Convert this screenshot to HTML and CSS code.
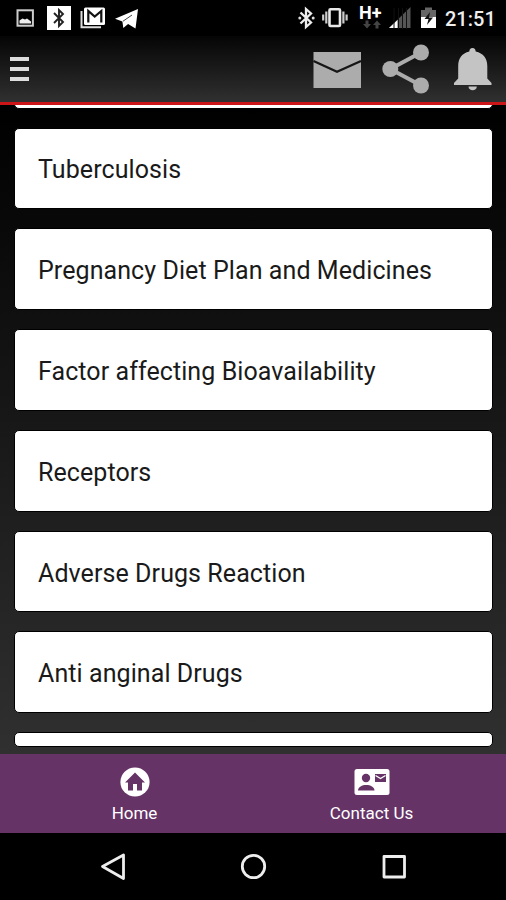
FILE: index.html
```html
<!DOCTYPE html>
<html lang="en">
<head>
  <meta charset="UTF-8" />
  <meta name="viewport" content="width=device-width, initial-scale=1.0"/>
  <title>Topics</title>
  <link rel="stylesheet" href="styles.css">
</head>
<body>
  <div class="status-bar">
    <svg class="status-left" width="150" height="36" viewBox="0 0 150 36">
      <!-- picture -->
      <rect x="17.5" y="10.3" width="15.4" height="15.4" fill="none" stroke="#ccc" stroke-width="2"/>
      <path d="M19.5 23.5v-3l3-2 2.5 1 2-1 4 3v2z" fill="#eee"/>
      <!-- bluetooth -->
      <rect x="47" y="6" width="24" height="24" fill="#fff"/>
      <path d="M54 13l9 9-4 4V10l4 4-9 9" fill="none" stroke="#222" stroke-width="1.9"/>
      <!-- mail stack -->
      <path d="M81.5 11v16.2H101" fill="none" stroke="#ddd" stroke-width="2"/>
      <rect x="84" y="7.5" width="21" height="17.5" rx="1.5" fill="#fff"/>
      <path d="M88.3 22.5V11l6.4 5.5 6.6-5.5v11.5" fill="none" stroke="#111" stroke-width="2.2"/>
      <!-- paper plane -->
      <path d="M115 18.8L138 9l-2.5 19.5-7.4-4.5-4.8 4-.9-6.4z" fill="#fff"/>
      <path d="M123 21.2l9-6.2" fill="none" stroke="#444" stroke-width="1"/>
    </svg>
    <svg class="status-icons" width="146" height="36" viewBox="298 0 146 36">
      <!-- bluetooth -->
      <path d="M300.5 12.5l10.5 10-5 4.5V9l5 4.5-10.5 10" fill="none" stroke="#eee" stroke-width="2.3"/>
      <circle cx="299.8" cy="18" r="1.5" fill="#ddd"/>
      <circle cx="313.2" cy="18" r="1.5" fill="#ddd"/>
      <!-- vibrate -->
      <rect x="329.5" y="9.2" width="10.5" height="16.8" rx="1" fill="none" stroke="#e8e8e8" stroke-width="2.6"/>
      <path d="M326.3 11.5v12M343.4 11.5v12M323.2 14.5v6M346.6 14.5v6" stroke="#ccc" stroke-width="2.2"/>
      <!-- mobile data -->
      <text x="359" y="19" class="net">H+</text>
      <path d="M363 24h2.5v-3.5h3V24h2.5l-4 4.5zM373 25l4-4.5 4 4.5h-2.5v3.5h-3V25z" fill="#444"/>
      <!-- signal -->
      <path d="M389 28L410.5 7v21z" fill="#555"/>
      <path d="M389 28l8.5-8v8z" fill="#fff"/>
      <path d="M394 8v21M398.5 8v21M402.5 8v21M406.5 8v21" stroke="#111" stroke-width="1"/>
      <!-- battery -->
      <path d="M421 10h4V7.5h7V10h4v8h-15z" fill="#666"/>
      <path d="M421 17h15v11h-15z" fill="#fff"/>
      <path d="M430 12l-5.500 7h4l-1.500 6 6-7.500h-4z" fill="#111"/>
    </svg>
    <span class="clock">21:51</span>
  </div>

  <header class="app-bar">
    <div class="menu">
      <span></span>
      <span></span>
      <span></span>
    </div>
    <svg class="actions" width="186" height="60" viewBox="310 39 186 60">
      <!-- messages -->
      <rect x="313.5" y="52" width="47.5" height="36" fill="#acacac"/>
      <path d="M313.5 61L337 71.800 361 61" fill="none" stroke="#161616" stroke-width="2.3"/>
      <!-- share -->
      <path d="M421 52.5L390.3 69 421 85.5" fill="none" stroke="#acacac" stroke-width="4"/>
      <circle cx="421" cy="52.5" r="8" fill="#acacac"/>
      <circle cx="390.3" cy="69" r="8" fill="#acacac"/>
      <circle cx="421" cy="85.5" r="8" fill="#acacac"/>
      <!-- notifications -->
      <path d="M472.5 48c2.200 0 3 1.400 3.200 3.600 7.600 1.700 11.600 7 11.600 14.400v12.500l4.200 4.500v2h-37.500v-2l4.200-4.500V66c0-7.400 3.800-12.700 11.100-14.400.2-2.200 1-3.600 3.200-3.600z" fill="#c4c4c4"/>
      <path d="M468.5 86.500h8.300c0 5-8.300 5-8.300 0z" fill="#c4c4c4"/>
    </svg>
  </header>

  <main class="content">
    <div class="topics">
      <div class="card"></div>
      <div class="card">Tuberculosis</div>
      <div class="card">Pregnancy Diet Plan and Medicines</div>
      <div class="card">Factor affecting Bioavailability</div>
      <div class="card">Receptors</div>
      <div class="card">Adverse Drugs Reaction</div>
      <div class="card">Anti anginal Drugs</div>
      <div class="card"></div>
    </div>
  </main>

  <nav class="tabs">
    <div class="tab">
      <svg width="36" height="30" viewBox="0 0 36 30">
        <circle cx="18" cy="15" r="14.6" fill="#fff"/>
        <path d="M18 5.500L8 15.500h3V23.500h5v-6.500h4v6.500h5v-8h3z" fill="#636"/>
      </svg>
      <span>Home</span>
    </div>
    <div class="tab">
      <svg width="36" height="30" viewBox="0 0 36 30">
        <rect x=".5" y="2" width="35" height="26" rx="2.5" fill="#fff"/>
        <circle cx="12" cy="11" r="4.2" fill="#636"/>
        <path d="M4 23.500c0-7.500 16.500-7.500 16.500 0z" fill="#636"/>
        <path d="M21 7h11v8H21z" fill="#636"/>
        <path d="M21.500 8.500l5 3 5-3" fill="none" stroke="#fff" stroke-width="1.3"/>
      </svg>
      <span>Contact Us</span>
    </div>
  </nav>

  <div class="system-nav">
    <svg width="506" height="66" viewBox="0 833 506 66" fill="none" stroke="#eee" stroke-width="2.8" stroke-linejoin="round">
      <path d="M123.500 855v23.500L102.500 866.500z"/>
      <circle cx="253.5" cy="866.5" r="11.2"/>
      <rect x="384" y="856.5" width="20.5" height="20.5"/>
    </svg>
  </div>
</body>
</html>
```

FILE: styles.css
```css
* {
  box-sizing: border-box;
}

body {
  margin: 0;
  width: 506px;
  height: 900px;
  display: flex;
  flex-direction: column;
  overflow: hidden;
  background: #000;
  font-family: Roboto, sans-serif;
}

svg {
  display: block;
}

.status-bar {
  height: 36px;
  flex: none;
  display: flex;
  align-items: center;
  background: #000;
  color: #eee;
}

.status-icons {
  margin-left: auto;
}

.net {
  font-size: 18px;
  font-weight: 700;
  fill: #fff;
}

.clock {
  width: 62px;
  padding: 1px 0 0 1px;
  font-size: 20px;
  font-weight: 500;
}

.app-bar {
  height: 69px;
  flex: none;
  display: flex;
  align-items: center;
  justify-content: space-between;
  padding: 0 10px;
  border-bottom: 3px solid #cc1517;
  background: linear-gradient(#050505, #303030);
}

.menu {
  display: flex;
  flex-direction: column;
  gap: 6px;
}

.menu span {
  width: 19px;
  height: 4px;
  background: #ddd;
}

.content {
  flex: 1;
  min-height: 0;
  padding: 0 13px 6px 14px;
  background: linear-gradient(#000, #303030);
}

.topics {
  height: 100%;
  overflow: hidden;
}

.card {
  height: 81.8px;
  margin-bottom: 19px;
  padding: 3px 0 0 23px;
  display: flex;
  align-items: center;
  background: #fff;
  border: 1px solid #000;
  border-radius: 5px;
  color: #1a1a1a;
  font-size: 25px;
  letter-spacing: .08px;
}

.card:first-child {
  margin-top: -78.3px;
}

.card:last-child {
  height: 15px;
}

.tabs {
  height: 79px;
  flex: none;
  display: flex;
  padding: 0 16px;
  background: #636;
}

.tab {
  width: 50%;
  display: flex;
  flex-direction: column;
  align-items: center;
  gap: 6px;
  padding-top: 12.5px;
  color: #fff;
  font-size: 17px;
}

.system-nav {
  height: 67px;
  flex: none;
  background: #000;
}
```
